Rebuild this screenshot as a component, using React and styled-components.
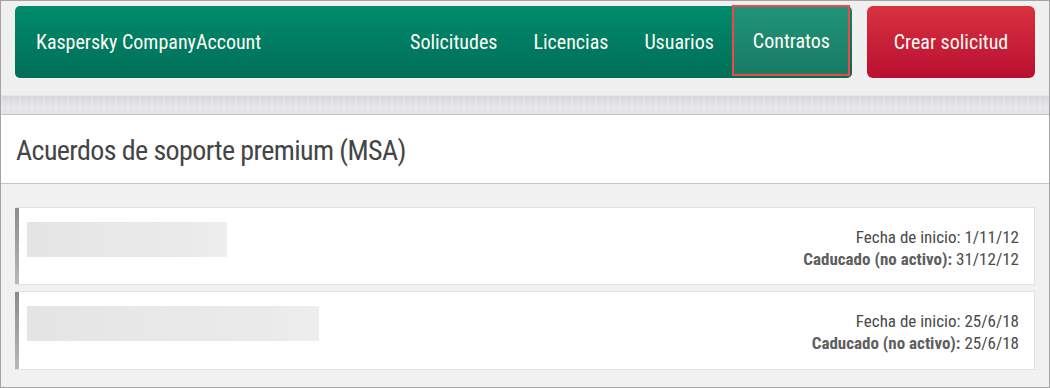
import styled, { createGlobalStyle } from "styled-components";

const GlobalStyle = createGlobalStyle`
  body {
    margin: 0;
    background: #ffffff;
  }
  * {
    box-sizing: border-box;
  }
`;

const font = `Roboto, "Liberation Sans", sans-serif`;

const Frame = styled.div`
  width: 1050px;
  height: 388px;
  border: 1px solid #a3a3a3;
  background: #f0f1f0;
  display: flex;
  flex-direction: column;
  overflow: hidden;
  font-family: ${font};
  font-stretch: condensed;
`;

const Header = styled.header`
  height: 94px;
  padding: 5px 14px 0 14px;
  display: flex;
  gap: 15px;
  background: #f0f0f0;
`;

const NavBar = styled.div`
  flex: 1;
  height: 72px;
  border-radius: 5px;
  background: linear-gradient(#008b6d, #006e57);
  display: flex;
  align-items: center;
  padding-left: 21px;
  color: #fffdf4;
`;

const Brand = styled.div`
  font-size: 20px;
`;

const Nav = styled.nav`
  margin-left: auto;
  display: flex;
  height: 100%;
  padding-right: 2px;
`;

const NavItem = styled.a`
  display: flex;
  align-items: center;
  padding: ${(p) => (p.$active ? "0 18px 0 19px" : "0 18px")};
  font-size: 20px;
  color: #fffdf4;
  text-decoration: none;
  height: ${(p) => (p.$active ? "71px" : "100%")};
  margin-top: ${(p) => (p.$active ? "-1px" : "0")};
  border: ${(p) => (p.$active ? "2px solid #f04848" : "none")};
  background: ${(p) =>
    p.$active ? "linear-gradient(#1f947a, #1a7a64)" : "transparent"};
`;

const CreateButton = styled.button`
  width: 168px;
  height: 72px;
  border: none;
  border-radius: 6px;
  background: linear-gradient(#d8323f, #b90f32);
  color: #fffdf4;
  font-family: ${font};
  font-stretch: condensed;
  font-size: 20px;
  padding: 0;
`;

const Band = styled.div`
  height: 20px;
  border-top: 1px solid #e6e6e8;
  border-bottom: 1px solid #c4c4c6;
  background: repeating-linear-gradient(
      90deg,
      rgba(255, 255, 255, 0.15) 0 2px,
      transparent 2px 6px
    ),
    linear-gradient(#d6d6da, #e6e6e9 60%, #e3e3e6);
`;

const TitlePanel = styled.div`
  height: 69px;
  background: #ffffff;
  border-bottom: 1px solid #c6c6c6;
  display: flex;
  align-items: center;
  padding: 2px 0 0 15px;
`;

const Title = styled.h1`
  margin: 0;
  font-weight: normal;
  font-size: 28px;
  letter-spacing: -0.6px;
  color: #454545;
`;

const Content = styled.div`
  padding: 23px 14px 0 14px;
  display: flex;
  flex-direction: column;
  gap: 6px;
`;

const Card = styled.div`
  height: ${(p) => p.$h}px;
  background: linear-gradient(#8c8c8c, #b8b8b8) left / 4px 100% no-repeat,
    #ffffff;
  border: 1px solid #e2e2e2;
  border-left: none;
  display: flex;
  justify-content: space-between;
  padding: 14px 15px 0 12px;
`;

const Blurred = styled.div`
  width: ${(p) => p.$w}px;
  height: 35px;
  background: linear-gradient(90deg, #e4e4e4, #e8e8e8 40%, #eaeaea 80%, #eeeeee);
  filter: blur(0.6px);
`;

const Dates = styled.div`
  text-align: right;
  font-size: 17px;
  line-height: 22px;
  color: #4a4a4a;
  padding-top: 4px;
`;

const Label = styled.span`
  font-weight: ${(p) => (p.$bold ? "bold" : "normal")};
  color: ${(p) => (p.$bold ? "#5e5e5e" : "#4a4a4a")};
`;

const contracts = [
  { start: "1/11/12", end: "31/12/12", w: 200, h: 78 },
  { start: "25/6/18", end: "25/6/18", w: 292, h: 79 },
];

export default function App() {
  return (
    <>
      <GlobalStyle />
      <Frame>
        <Header>
          <NavBar>
            <Brand>Kaspersky CompanyAccount</Brand>
            <Nav>
              <NavItem>Solicitudes</NavItem>
              <NavItem>Licencias</NavItem>
              <NavItem>Usuarios</NavItem>
              <NavItem $active>Contratos</NavItem>
            </Nav>
          </NavBar>
          <CreateButton>Crear solicitud</CreateButton>
        </Header>
        <Band />
        <TitlePanel>
          <Title>Acuerdos de soporte premium (MSA)</Title>
        </TitlePanel>
        <Content>
          {contracts.map((c, i) => (
            <Card key={i} $h={c.h}>
              <Blurred $w={c.w} />
              <Dates>
                <div>
                  <Label>Fecha de inicio:</Label> {c.start}
                </div>
                <div>
                  <Label $bold>Caducado (no activo):</Label> {c.end}
                </div>
              </Dates>
            </Card>
          ))}
        </Content>
      </Frame>
    </>
  );
}
